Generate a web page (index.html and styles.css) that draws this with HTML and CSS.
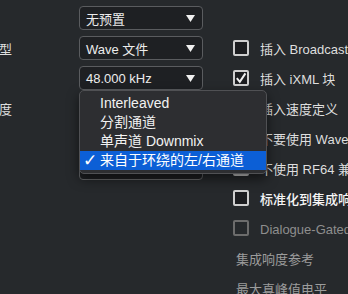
FILE: index.html
```html
<!DOCTYPE html>
<html lang="zh-CN">

<head>
  <meta charset="UTF-8">
  <meta name="viewport" content="width=device-width, initial-scale=1.0">
  <title>导出设置</title>
  <link rel="stylesheet" href="styles.css">
</head>

<body>
  <div class="panel">
    <div class="grid">
      <!-- 第 0 行 -->
      <div class="label"></div>
      <div class="cell"><div class="select"><span>无预置</span><svg class="arrow" viewBox="0 0 9 7"><polygon points="0,0 9,0 4.5,7"/></svg></div></div>
      <div class="opt"></div>

      <!-- 第 1 行 -->
      <div class="label"><span>文件类型</span></div>
      <div class="cell"><div class="select"><span>Wave 文件</span><svg class="arrow" viewBox="0 0 9 7"><polygon points="0,0 9,0 4.5,7"/></svg></div></div>
      <div class="opt"><span class="box"></span><span>插入 Broadcast Wave 块</span></div>

      <!-- 第 2 行 -->
      <div class="label"></div>
      <div class="cell"><div class="select"><span>48.000 kHz</span><svg class="arrow" viewBox="0 0 9 7"><polygon points="0,0 9,0 4.5,7"/></svg></div></div>
      <div class="opt"><span class="box"><svg viewBox="0 0 12 12"><polyline points="1.8,6.2 4.8,9.8 10.4,1.4"/></svg></span><span>插入 iXML 块</span></div>

      <!-- 第 3 行 -->
      <div class="label"><span>位深度</span></div>
      <div class="cell"><div class="select"><span>24 位</span><svg class="arrow" viewBox="0 0 9 7"><polygon points="0,0 9,0 4.5,7"/></svg></div></div>
      <div class="opt"><span class="box"></span><span>插入速度定义</span></div>

      <!-- 第 4 行 -->
      <div class="label"></div>
      <div class="cell"></div>
      <div class="opt"><span class="box"></span><span>不要使用 Wave 可扩展格式</span></div>

      <!-- 第 5 行：弹出菜单所属的下拉框 -->
      <div class="label"></div>
      <div class="cell"><div class="select open"></div></div>
      <div class="opt"><span class="box"></span><span>不使用 RF64 兼容模式</span></div>

      <!-- 第 6 行 -->
      <div class="label"></div>
      <div class="cell"></div>
      <div class="opt strong"><span class="box"></span><span>标准化到集成响度</span></div>

      <!-- 第 7 行 -->
      <div class="label"></div>
      <div class="cell"></div>
      <div class="opt disabled"><span class="box"></span><span>Dialogue-Gated 集成响度</span></div>

      <!-- 第 8 行 -->
      <div class="label"></div>
      <div class="cell"></div>
      <div class="opt plain"><span>集成响度参考</span></div>

      <!-- 第 9 行 -->
      <div class="label"></div>
      <div class="cell"></div>
      <div class="opt plain"><span>最大真峰值电平</span></div>
    </div>

    <!-- 弹出菜单 -->
    <ul class="popup">
      <li><span class="check"></span>Interleaved</li>
      <li><span class="check"></span>分割通道</li>
      <li><span class="check"></span>单声道 Downmix</li>
      <li class="selected"><span class="check">✓</span>来自于环绕的左/右通道</li>
    </ul>
  </div>
</body>

</html>
```

FILE: styles.css
```css
:root {
  --bg-color: #26292c;
  --field-bg: #1e2023;
  --field-border: #5a5c5f;
  --text-color: #dedede;
  --muted: #8e8e8e;
  --menu-bg: #2d2e31;
  --menu-border: #505154;
  --accent: #0c5fd6;
}

html,
body {
  margin: 0;
  height: 100%;
  overflow: hidden;
  background-color: var(--bg-color);
}

body {
  font-family: 'Liberation Sans', 'Noto Sans CJK SC', sans-serif;
  font-size: 13px;
  color: var(--text-color);
}

.panel {
  position: relative;
  height: 100%;
}

.grid {
  display: grid;
  grid-template-columns: 79px 124px 1fr;
  grid-auto-rows: 30px;
  padding-top: 3px;
}

.label {
  width: 12px;
  display: flex;
  align-items: center;
  justify-content: flex-end;
  overflow: hidden;
  white-space: nowrap;
}

.cell {
  display: flex;
  align-items: center;
}

.select {
  box-sizing: border-box;
  width: 124px;
  height: 24px;
  display: flex;
  align-items: center;
  justify-content: space-between;
  padding: 0 7px 0 6px;
  border: 1px solid var(--field-border);
  border-radius: 4px;
  background-color: var(--field-bg);
  color: #ececec;
  white-space: nowrap;
  overflow: hidden;
}

.select.open {
  border-color: #66686b;
}

.arrow {
  width: 9px;
  height: 7px;
  fill: #f0f0f0;
  flex-shrink: 0;
}

.opt {
  display: flex;
  align-items: center;
  gap: 11px;
  padding-left: 30px;
  white-space: nowrap;
}

.box {
  box-sizing: border-box;
  width: 16px;
  height: 16px;
  flex-shrink: 0;
  display: flex;
  align-items: center;
  justify-content: center;
  border: 2px solid #cfcfcf;
  border-radius: 2px;
  background-color: #1c1d20;
}

.box svg {
  width: 12px;
  height: 12px;
  fill: none;
  stroke: #f0f0f0;
  stroke-width: 2;
}

.strong {
  color: #f6f6f6;
  font-weight: 500;
}

.disabled {
  color: var(--muted);
}

.disabled .box {
  border-color: #6c6c6c;
  background-color: transparent;
}

.plain {
  padding-left: 33px;
  color: #9c9c9c;
}

.popup {
  position: absolute;
  left: 79px;
  top: 90px;
  box-sizing: border-box;
  width: 188px;
  height: 84px;
  margin: 0;
  padding: 3px 0;
  list-style: none;
  background-color: var(--menu-bg);
  border: 1px solid var(--menu-border);
  border-radius: 5px;
  box-shadow: 0 5px 12px rgba(0, 0, 0, 0.55);
  font-size: 14px;
  color: #f2f2f2;
}

.popup li {
  display: flex;
  height: 19px;
  line-height: 19px;
  padding-left: 3px;
  white-space: nowrap;
}

.check {
  width: 17px;
  font-family: 'DejaVu Sans', sans-serif;
  font-size: 17px;
}

.popup li.selected {
  background-color: var(--accent);
  color: #ffffff;
}
```
